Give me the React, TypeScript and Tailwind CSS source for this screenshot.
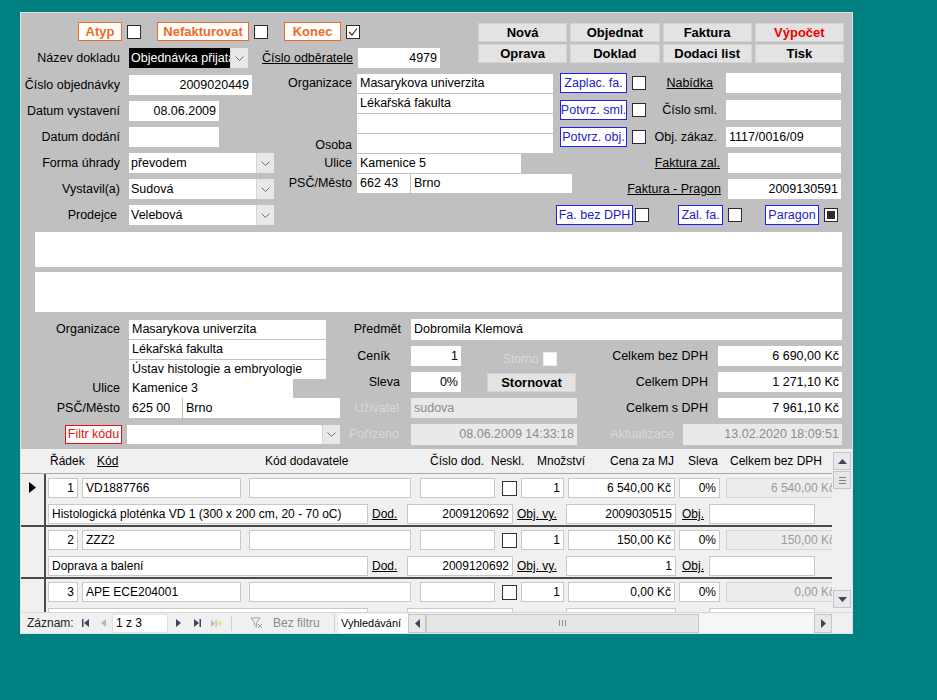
import React from "react";

type P = { className?: string; children?: React.ReactNode };

const orange = "border-[#f26a1b] text-[#f26a1b] font-bold text-[13px] h-[19px]";
const blue = "border-[#2020e8] text-[#2222c4] h-[20px]";

function Lbl({ className = "", children }: P) {
  return <div className={`flex flex-none items-center justify-end whitespace-nowrap ${className}`}>{children}</div>;
}

function Inp({ className = "", children }: P) {
  return (
    <div className={`flex flex-none items-center bg-white px-[3px] whitespace-nowrap overflow-hidden ${className}`}>{children}</div>
  );
}

function Dis({ className = "", children }: P) {
  return (
    <div className={`flex flex-none items-center bg-[#e9e9e9] text-[#8c8c8c] px-[3px] whitespace-nowrap overflow-hidden ${className}`}>
      {children}
    </div>
  );
}

function Chev() {
  return (
    <svg width="9" height="5" viewBox="0 0 9 5">
      <path d="M0.5 0.5 L4.5 4.5 L8.5 0.5" stroke="#707070" fill="none" />
    </svg>
  );
}

function Combo({ className = "", inner = "", children }: P & { inner?: string }) {
  return (
    <div className={`flex flex-none bg-white ${className}`}>
      <div className={`flex-1 min-w-0 flex items-center px-[2px] whitespace-nowrap overflow-hidden ${inner}`}>{children}</div>
      <div className="w-[18px] flex-none flex items-center justify-center bg-[#e8e8e8] border-l border-[#d4d4d4]">
        <Chev />
      </div>
    </div>
  );
}

function Chk({ className = "", children }: P) {
  return (
    <div className={`w-[14px] h-[14px] flex-none bg-white border border-[#2b2b2b] flex items-center justify-center ${className}`}>
      {children}
    </div>
  );
}

function Tag({ className = "", children }: P) {
  return (
    <div className={`flex flex-none items-center justify-center bg-white border whitespace-nowrap ${className}`}>{children}</div>
  );
}

function Btn({ className = "", children }: P) {
  return (
    <div className={`flex flex-none items-center justify-center bg-[#e3e3e3] border border-[#d4d4d4] font-bold text-[13px] ${className}`}>
      {children}
    </div>
  );
}

const buttons = [
  { t: "Nová" },
  { t: "Objednat" },
  { t: "Faktura" },
  { t: "Výpočet", red: true },
  { t: "Oprava" },
  { t: "Doklad" },
  { t: "Dodaci list" },
  { t: "Tisk" },
];

const rows = [
  {
    n: 1,
    kod: "VD1887766",
    desc: "Histologická ploténka VD 1 (300 x 200 cm, 20 - 70 oC)",
    cena: "6 540,00 Kč",
    dod: "2009120692",
    objvy: "2009030515",
  },
  { n: 2, kod: "ZZZ2", desc: "Doprava a balení", cena: "150,00 Kč", dod: "2009120692", objvy: "1" },
  { n: 3, kod: "APE ECE204001", desc: "", cena: "0,00 Kč", dod: "", objvy: "" },
];

function Cell({ className = "", children }: P) {
  return (
    <div className={`flex flex-none items-center h-[20px] bg-white border border-[#c8c8c8] px-[3px] whitespace-nowrap overflow-hidden ${className}`}>
      {children}
    </div>
  );
}

function Record({ r, first }: { r: (typeof rows)[number]; first?: boolean }) {
  return (
    <div className="flex flex-none border-b-2 border-[#4a4a4a]">
      <div className={`w-[25px] flex-none border-r-2 border-[#4a4a4a] flex justify-center ${first ? "pt-[8px]" : ""}`}>
        {first && (
          <svg width="7" height="11" viewBox="0 0 7 11">
            <path d="M0 0 L7 5.5 L0 11Z" fill="#000" />
          </svg>
        )}
      </div>
      <div className={`flex flex-col pb-[1px] ${first ? "pt-[4px]" : "pt-[3px]"}`}>
        <div className="flex items-center h-[20px]">
          <Cell className="ml-[2px] w-[30px] justify-end">{r.n}</Cell>
          <Cell className="ml-[4px] w-[159px]">{r.kod}</Cell>
          <Cell className="ml-[8px] w-[162px]" />
          <Cell className="ml-[9px] w-[75px]" />
          <div className="ml-[7px] w-[15px] h-[15px] flex-none bg-white border border-[#333]" />
          <Cell className="ml-[4px] w-[43px] justify-end">1</Cell>
          <Cell className="ml-[4px] w-[107px] justify-end">{r.cena}</Cell>
          <Cell className="ml-[4px] w-[41px] justify-end">0%</Cell>
          <Cell className="ml-[6px] w-[113px] justify-end !bg-[#ececec] !border-[#d6d6d6] text-[#9a9a9a]">{r.cena}</Cell>
        </div>
        <div className="flex items-center h-[20px] mt-[6px]">
          <Cell className="ml-[2px] w-[320px]">{r.desc}</Cell>
          <div className="w-[39px] flex-none pl-[4px] underline">Dod.</div>
          <Cell className="w-[106px] justify-end">{r.dod}</Cell>
          <div className="w-[53px] flex-none pl-[4px] underline whitespace-nowrap">Obj. vy.</div>
          <Cell className="w-[110px] justify-end">{r.objvy}</Cell>
          <div className="w-[33px] flex-none pl-[6px] underline">Obj.</div>
          <Cell className="w-[106px]" />
        </div>
      </div>
    </div>
  );
}

function Tri({ d, fill = "#3c4664", w = 8, h = 8 }: { d: string; fill?: string; w?: number; h?: number }) {
  return (
    <svg width={w} height={h} viewBox={`0 0 ${w} ${h}`}>
      <path d={d} fill={fill} />
    </svg>
  );
}

export default function App() {
  return (
    <div className="w-[937px] h-[700px] bg-[#008080] pt-[12px] pl-[20px] overflow-hidden font-['Liberation_Sans',Arial,sans-serif] text-[12.5px] text-black leading-none">
      <div className="w-[833px] h-[622px] bg-[#c0c0c0] border border-[#e2e2e2] flex flex-col">
        {/* form header */}
        <div className="h-[436px] flex-none flex flex-col">
          {/* toggles + buttons */}
          <div className="flex h-[57px] flex-none">
            <div className="w-[457px] flex-none flex flex-col">
              <div className="flex items-center h-[19px] mt-[9px]">
                <Tag className={`${orange} ml-[57px] w-[44px]`}>Atyp</Tag>
                <Chk className="ml-[5px]" />
                <Tag className={`${orange} ml-[16px] w-[92px]`}>Nefakturovat</Tag>
                <Chk className="ml-[5px]" />
                <Tag className={`${orange} ml-[16px] w-[57px]`}>Konec</Tag>
                <Chk className="ml-[5px]">
                  <svg width="12" height="12" viewBox="0 0 12 12">
                    <path d="M2 6 L5 9 L10 2.5" stroke="#333" strokeWidth="1.2" fill="none" />
                  </svg>
                </Chk>
              </div>
              <div className="flex h-[20px] mt-[7px]">
                <Lbl className="w-[102px] pr-[3px]">Název dokladu</Lbl>
                <Combo className="ml-[6px] w-[119px]" inner="bg-black text-white">
                  Objednávka přijatá
                </Combo>
                <Lbl className="ml-[14px] w-[91px] !justify-start underline">Číslo odběratele</Lbl>
                <Inp className="ml-[5px] w-[82px] justify-end">4979</Inp>
              </div>
            </div>
            <div className="mt-[10px] grid grid-cols-4 gap-x-[3px] gap-y-[2px] w-[366px] h-[40px]">
              {buttons.map((b) => (
                <Btn key={b.t} className={b.red ? "text-[#ee0000]" : ""}>
                  {b.t}
                </Btn>
              ))}
            </div>
          </div>

          {/* three columns */}
          <div className="flex h-[157px] flex-none">
            <div className="w-[257px] flex-none flex flex-col pt-[5px] gap-[6px]">
              <div className="flex h-[20px]">
                <Lbl className="w-[102px] pr-[3px]">Číslo objednávky</Lbl>
                <Inp className="ml-[6px] w-[123px] justify-end">2009020449</Inp>
              </div>
              <div className="flex h-[20px]">
                <Lbl className="w-[102px] pr-[3px]">Datum vystavení</Lbl>
                <Inp className="ml-[6px] w-[90px] justify-end">08.06.2009</Inp>
              </div>
              <div className="flex h-[20px]">
                <Lbl className="w-[102px] pr-[3px]">Datum dodání</Lbl>
                <Inp className="ml-[6px] w-[90px]" />
              </div>
              <div className="flex h-[20px]">
                <Lbl className="w-[102px] pr-[3px]">Forma úhrady</Lbl>
                <Combo className="ml-[6px] w-[145px]">převodem</Combo>
              </div>
              <div className="flex h-[20px]">
                <Lbl className="w-[102px] pr-[3px]">Vystavil(a)</Lbl>
                <Combo className="ml-[6px] w-[145px]">Sudová</Combo>
              </div>
              <div className="flex h-[20px]">
                <Lbl className="w-[102px] pr-[6px]">Prodejce</Lbl>
                <Combo className="ml-[6px] w-[145px]">Velebová</Combo>
              </div>
            </div>

            <div className="w-[277px] flex-none flex flex-col pt-[4px] gap-[1px]">
              <div className="flex h-[19px]">
                <Lbl className="w-[76px] pr-[2px]">Organizace</Lbl>
                <Inp className="ml-[3px] w-[196px]">Masarykova univerzita</Inp>
              </div>
              <div className="flex h-[19px]">
                <div className="w-[76px] flex-none" />
                <Inp className="ml-[3px] w-[196px]">Lékařská fakulta</Inp>
              </div>
              <div className="flex h-[19px]">
                <div className="w-[76px] flex-none" />
                <Inp className="ml-[3px] w-[196px]" />
              </div>
              <div className="flex h-[19px]">
                <Lbl className="w-[76px] pr-[2px] pt-[4px]">Osoba</Lbl>
                <Inp className="ml-[3px] w-[196px]" />
              </div>
              <div className="flex h-[19px]">
                <Lbl className="w-[76px] pr-[2px]">Ulice</Lbl>
                <Inp className="ml-[3px] w-[164px]">Kamenice 5</Inp>
              </div>
              <div className="flex h-[19px]">
                <Lbl className="w-[76px] pr-[2px]">PSČ/Město</Lbl>
                <Inp className="ml-[3px] w-[53px]">662 43</Inp>
                <Inp className="ml-[1px] w-[161px]">Brno</Inp>
              </div>
            </div>

            <div className="w-[288px] flex-none flex flex-col pt-[3px]">
              <div className="flex items-center h-[20px]">
                <Tag className={`${blue} ml-[5px] w-[67px]`}>Zaplac. fa.</Tag>
                <Chk className="ml-[5px]" />
                <Lbl className="w-[75px] pr-[8px] underline">Nabídka</Lbl>
                <Inp className="ml-[5px] w-[115px] h-[20px]" />
              </div>
              <div className="flex items-center h-[20px] mt-[7px]">
                <Tag className={`${blue} ml-[5px] w-[67px]`}>Potvrz. sml.</Tag>
                <Chk className="ml-[5px]" />
                <Lbl className="w-[75px] pr-[4px]">Číslo sml.</Lbl>
                <Inp className="ml-[5px] w-[115px] h-[20px]" />
              </div>
              <div className="flex items-center h-[20px] mt-[7px]">
                <Tag className={`${blue} ml-[5px] w-[67px]`}>Potvrz. obj.</Tag>
                <Chk className="ml-[5px]" />
                <Lbl className="w-[75px] pr-[4px]">Obj. zákaz.</Lbl>
                <Inp className="ml-[5px] w-[115px] h-[20px]">1117/0016/09</Inp>
              </div>
              <div className="flex items-center h-[20px] mt-[6px]">
                <Lbl className="w-[167px] pr-[2px] underline">Faktura zal.</Lbl>
                <Inp className="ml-[6px] w-[113px] h-[20px]" />
              </div>
              <div className="flex items-center h-[20px] mt-[6px]">
                <Lbl className="w-[167px] pr-[1px] underline">Faktura - Pragon</Lbl>
                <Inp className="ml-[6px] w-[113px] h-[20px] justify-end">2009130591</Inp>
              </div>
              <div className="flex items-center h-[20px] mt-[6px]">
                <Tag className={`${blue} ml-[1px] w-[77px]`}>Fa. bez DPH</Tag>
                <Chk className="ml-[2px]" />
                <Tag className={`${blue} ml-[29px] w-[45px]`}>Zal. fa.</Tag>
                <Chk className="ml-[5px]" />
                <Tag className={`${blue} ml-[23px] w-[54px]`}>Paragon</Tag>
                <Chk className="ml-[5px]">
                  <div className="w-[8px] h-[8px] bg-[#2b2b2b]" />
                </Chk>
              </div>
            </div>
          </div>

          {/* memo boxes */}
          <div className="ml-[14px] w-[807px] h-[35px] mt-[5px] bg-white flex-none" />
          <div className="ml-[14px] w-[807px] h-[40px] mt-[5px] bg-white flex-none" />

          {/* lower block */}
          <div className="flex h-[127px] mt-[7px] flex-none">
            <div className="w-[324px] flex-none flex flex-col pt-[1px]">
              <div className="flex h-[19px]">
                <Lbl className="w-[102px] pr-[3px]">Organizace</Lbl>
                <Inp className="ml-[6px] w-[197px]">Masarykova univerzita</Inp>
              </div>
              <div className="flex h-[19px] mt-[1px]">
                <div className="w-[102px] flex-none" />
                <Inp className="ml-[6px] w-[197px]">Lékařská fakulta</Inp>
              </div>
              <div className="flex h-[19px] mt-[1px]">
                <div className="w-[102px] flex-none" />
                <Inp className="ml-[6px] w-[197px]">Ústav histologie a embryologie</Inp>
              </div>
              <div className="flex h-[19px]">
                <Lbl className="w-[102px] pr-[3px]">Ulice</Lbl>
                <Inp className="ml-[6px] w-[164px]">Kamenice 3</Inp>
              </div>
              <div className="flex h-[20px]">
                <Lbl className="w-[102px] pr-[3px]">PSČ/Město</Lbl>
                <Inp className="ml-[6px] w-[53px]">625 00</Inp>
                <Inp className="ml-[1px] w-[157px]">Brno</Inp>
              </div>
              <div className="flex h-[19px] mt-[7px]">
                <Tag className="ml-[44px] w-[57px] h-[19px] border-[#e01010] text-[#e01010]">Filtr kódu</Tag>
                <Combo className="ml-[5px] w-[213px]" />
              </div>
            </div>

            <div className="flex-1 flex flex-col">
              <div className="flex h-[21px]">
                <Lbl className="w-[58px] pr-[2px]">Předmět</Lbl>
                <Inp className="ml-[8px] w-[431px]">Dobromila Klemová</Inp>
              </div>
              <div className="flex h-[20px] mt-[6px]">
                <div className="w-[255px] flex-none flex items-center">
                  <Lbl className="w-[58px] pr-[13px] h-full">Ceník</Lbl>
                  <Inp className="ml-[8px] w-[50px] h-full justify-end">1</Inp>
                  <div className="ml-[42px] w-[40px] flex-none text-[#dadada] mt-[6px] text-[12px]">Storno</div>
                  <div className="w-[14px] h-[14px] flex-none mt-[5px] bg-white border border-[#ededed]" />
                </div>
                <Lbl className="w-[112px] pr-[4px]">Celkem bez DPH</Lbl>
                <Inp className="ml-[6px] w-[124px] justify-end">6 690,00 Kč</Inp>
              </div>
              <div className="flex h-[20px] mt-[6px]">
                <div className="w-[255px] flex-none flex items-center">
                  <Lbl className="w-[58px] pr-[3px] h-full">Sleva</Lbl>
                  <Inp className="ml-[8px] w-[50px] h-full justify-end">0%</Inp>
                  <Btn className="ml-[26px] w-[89px] h-[19px]">Stornovat</Btn>
                </div>
                <Lbl className="w-[112px] pr-[4px]">Celkem DPH</Lbl>
                <Inp className="ml-[6px] w-[124px] justify-end">1 271,10 Kč</Inp>
              </div>
              <div className="flex h-[20px] mt-[6px]">
                <div className="w-[255px] flex-none flex items-center">
                  <Lbl className="w-[58px] pr-[4px] h-full text-[#d8d8d8]">Uživatel</Lbl>
                  <Dis className="ml-[8px] w-[166px] h-full">sudova</Dis>
                </div>
                <Lbl className="w-[112px] pr-[4px]">Celkem s DPH</Lbl>
                <Inp className="ml-[6px] w-[124px] justify-end">7 961,10 Kč</Inp>
              </div>
              <div className="flex h-[21px] mt-[6px]">
                <div className="w-[255px] flex-none flex items-center">
                  <Lbl className="w-[58px] pr-[4px] h-full text-[#d8d8d8]">Pořízeno</Lbl>
                  <Dis className="ml-[8px] w-[166px] h-full justify-end">08.06.2009 14:33:18</Dis>
                </div>
                <Lbl className="w-[78px] pr-[4px] text-[#d8d8d8]">Aktualizace</Lbl>
                <Dis className="ml-[5px] w-[159px] justify-end">13.02.2020 18:09:51</Dis>
              </div>
            </div>
          </div>
        </div>

        {/* subform */}
        <div className="flex-1 flex flex-col bg-[#f0f0f0] text-[12px]">
          <div className="flex h-[163px] flex-none">
            <div className="w-[811px] flex-none flex flex-col overflow-hidden">
              <div className="flex items-center h-[25px] flex-none border-b border-[#a8a8a8] whitespace-nowrap">
                <div className="w-[76px] flex-none pl-[29px]">Řádek</div>
                <div className="w-[168px] flex-none underline">Kód</div>
                <div className="w-[165px] flex-none">Kód dodavatele</div>
                <div className="w-[61px] flex-none">Číslo dod.</div>
                <div className="w-[46px] flex-none">Neskl.</div>
                <div className="w-[73px] flex-none">Množství</div>
                <div className="w-[78px] flex-none">Cena za MJ</div>
                <div className="w-[42px] flex-none">Sleva</div>
                <div className="flex-1">Celkem bez DPH</div>
              </div>
              <div className="flex-1 flex flex-col overflow-hidden">
                {rows.map((r, i) => (
                  <Record key={r.n} r={r} first={i === 0} />
                ))}
              </div>
            </div>
            <div className="w-[20px] flex-none flex flex-col items-center pt-[3px] pb-[4px]">
              <div className="w-[18px] h-[18px] flex items-center justify-center bg-[#e8e8e8] border border-[#c4c4c4]">
                <Tri d="M0 5 L4.5 0 L9 5Z" w={9} h={5} />
              </div>
              <div className="w-[18px] h-[18px] mt-[1px] flex flex-col items-center justify-center gap-[2px] bg-[#e6e6e6] border border-[#c4c4c4]">
                <div className="w-[7px] h-px bg-[#808080]" />
                <div className="w-[7px] h-px bg-[#808080]" />
                <div className="w-[7px] h-px bg-[#808080]" />
              </div>
              <div className="flex-1" />
              <div className="w-[18px] h-[18px] flex items-center justify-center bg-[#e8e8e8] border border-[#c4c4c4]">
                <Tri d="M0 0 L9 0 L4.5 5Z" w={9} h={5} />
              </div>
            </div>
          </div>

          {/* navigation bar */}
          <div className="flex items-center h-[21px] flex-none border-t border-[#d8d8d8] whitespace-nowrap">
            <div className="w-[55px] flex-none pl-[6px] text-[#222]">Záznam:</div>
            <div className="w-[18px] flex-none flex justify-center">
              <svg width="7" height="8" viewBox="0 0 7 8">
                <rect x="0" y="0" width="1.5" height="8" fill="#3c4664" />
                <path d="M7 0 L2 4 L7 8Z" fill="#3c4664" />
              </svg>
            </div>
            <div className="w-[18px] flex-none flex justify-center">
              <Tri d="M5 0 L0 4 L5 8Z" fill="#b8b8b8" w={5} h={8} />
            </div>
            <div className="w-[56px] h-[19px] flex-none flex items-center bg-white border border-[#e0e0e0] pl-[3px]">1 z 3</div>
            <div className="w-[20px] flex-none flex justify-center">
              <Tri d="M0 0 L5 4 L0 8Z" w={5} h={8} />
            </div>
            <div className="w-[18px] flex-none flex justify-center">
              <svg width="7" height="8" viewBox="0 0 7 8">
                <path d="M0 0 L5 4 L0 8Z" fill="#3c4664" />
                <rect x="5.5" y="0" width="1.5" height="8" fill="#3c4664" />
              </svg>
            </div>
            <div className="w-[20px] flex-none flex justify-center">
              <svg width="11" height="9" viewBox="0 0 11 9">
                <path d="M0 1 L4 4.5 L0 8Z" fill="#b8b8b8" />
                <rect x="4.5" y="1" width="1.2" height="7" fill="#b8b8b8" />
                <circle cx="8.5" cy="4.5" r="2.2" fill="#f2e08a" />
              </svg>
            </div>
            <div className="w-[10px] flex-none flex justify-center">
              <div className="w-px h-[15px] bg-[#d0d0d0]" />
            </div>
            <div className="w-[98px] flex-none flex items-center pl-[14px] text-[#8a8a8a]">
              <svg width="13" height="12" viewBox="0 0 13 12" className="mr-[10px]">
                <path d="M1 1 L10 1 L6.5 5.5 L6.5 10 L4.5 8.5 L4.5 5.5Z" fill="none" stroke="#a0a0a0" />
                <path d="M8 7 L12 11 M12 7 L8 11" stroke="#a0a0a0" />
              </svg>
              Bez filtru
            </div>
            <div className="w-px h-[19px] bg-[#d0d0d0] flex-none" />
            <div className="ml-[4px] w-[69px] h-[19px] flex-none flex items-center bg-white pl-[2px] text-[11px] overflow-hidden">
              Vyhledávání
            </div>
            <div className="flex-1 flex h-[19px]">
              <div className="w-[18px] flex-none flex items-center justify-center bg-[#e8e8e8] border border-[#c4c4c4]">
                <Tri d="M5 0 L0 4.5 L5 9Z" w={5} h={9} />
              </div>
              <div className="w-[273px] flex-none flex items-center justify-center bg-[#e6e6e6] border border-[#c8c8c8] gap-[2px]">
                <div className="w-px h-[6px] bg-[#909090]" />
                <div className="w-px h-[6px] bg-[#909090]" />
                <div className="w-px h-[6px] bg-[#909090]" />
              </div>
              <div className="flex-1 bg-[#f6f6f6]" />
              <div className="w-[18px] flex-none flex items-center justify-center bg-[#e8e8e8] border border-[#c4c4c4]">
                <Tri d="M0 0 L5 4.5 L0 9Z" w={5} h={9} />
              </div>
            </div>
            <div className="w-[20px] flex-none" />
          </div>
        </div>
      </div>
    </div>
  );
}
